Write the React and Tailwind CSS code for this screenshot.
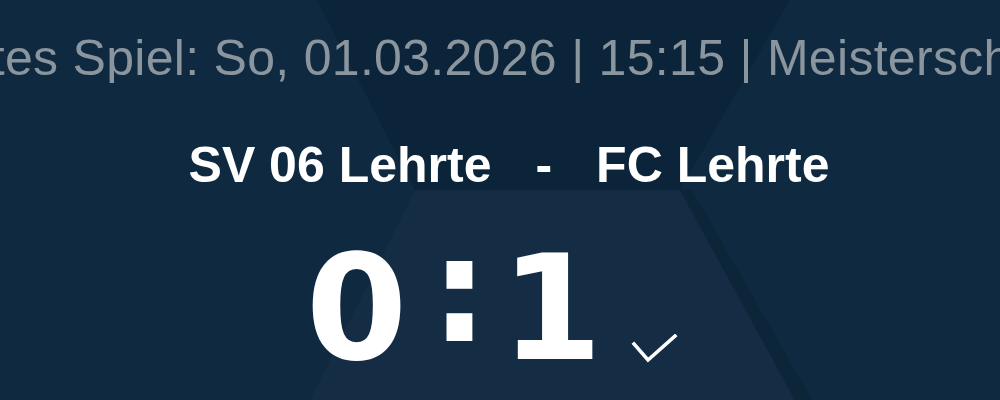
export default function App() {
  return (
    <div className="relative w-[1000px] h-[400px] overflow-hidden bg-[#0f2940]">
      {/* background shapes */}
      <svg className="absolute inset-0" width="1000" height="400" viewBox="0 0 1000 400">
        <polygon points="317,0 790,0 680,190 415,190" fill="#0c2439" />
        <polygon points="415,190 680,190 795,400 310,400" fill="#142d45" />
        <polygon points="680,190 692,190 812,400 795,400" fill="#0d2539" />
      </svg>

      <div className="relative flex flex-col">
        {/* ticker line */}
        <div className="pt-[33px] whitespace-nowrap overflow-hidden">
          <div className="ml-[-105px] text-[50px] leading-none tracking-[0.3px] text-[#8b959e] font-['Liberation_Sans',Arial,sans-serif]">
            Letztes Spiel: So, 01.03.2026 | 15:15 | Meisterschaft
          </div>
        </div>

        {/* teams */}
        <div className="mt-[57px] pl-[18px] flex justify-center gap-[44px] text-[50px] leading-none font-bold text-white font-['Liberation_Sans',Arial,sans-serif]">
          <span>SV 06 Lehrte</span>
          <span>-</span>
          <span>FC Lehrte</span>
        </div>

        {/* score */}
        <div className="mt-[27px] pr-[15px] flex justify-center items-end text-[146px] leading-none font-bold text-white font-['DejaVu_Sans',sans-serif]">
          <span>0</span>
          <span className="ml-[23px] pb-[18px]">:</span>
          <span className="ml-[12px]">1</span>
          <svg className="ml-[29px] mb-[15px]" width="48" height="32" viewBox="0 0 48 32" fill="none">
            <polyline points="3,10 17,26 44,2" stroke="white" strokeWidth="3.5" strokeLinecap="square" />
          </svg>
        </div>
      </div>
    </div>
  )
}
